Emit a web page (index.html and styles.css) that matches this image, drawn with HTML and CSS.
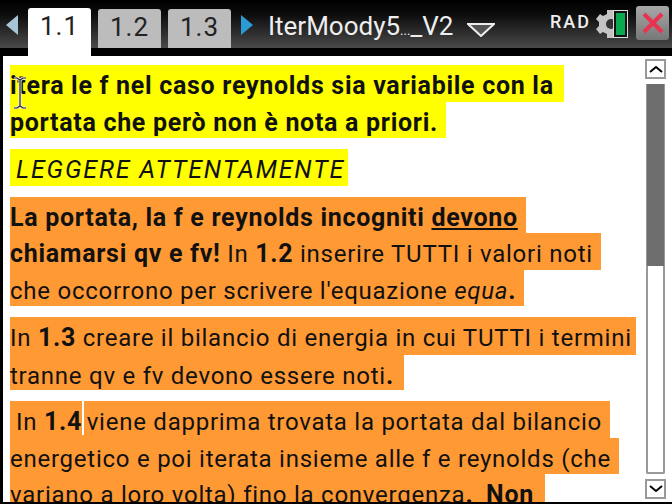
FILE: index.html
```html
<!DOCTYPE html>
<html lang="en">
<head>
    <meta charset="UTF-8">
    <title>IterMoody5..._V2</title>
    <link rel="stylesheet" href="styles.css">
</head>
<body>
  <header class="topbar">
    <svg class="arrow arrow-left" width="12" height="20" viewBox="0 0 12 20"><path d="M12 0V20L0 10Z" fill="#a9c6d6"/></svg>
    <div class="tabs">
      <div class="tab tab-active">1.1</div>
      <div class="tab">1.2</div>
      <div class="tab">1.3</div>
    </div>
    <svg class="arrow arrow-right" width="12" height="20" viewBox="0 0 12 20"><path d="M0 0V20L12 10Z" fill="#2b9ad6"/></svg>
    <div class="doc-title">IterMoody5<span class="dots">...</span>_V2</div>
    <svg class="doc-menu" width="28" height="14" viewBox="0 0 28 14"><path d="M1 1H27L14 13Z" fill="#555" stroke="#eee" stroke-width="2"/></svg>
    <div class="rad">RAD</div>
    <svg class="status" width="36" height="32" viewBox="0 0 36 32">
      <path d="M13 2h8v4l4 2 3-2 4 5-3 3v4l3 3-4 5-3-2-4 2v4h-8v-4l-4-2-3 2-4-5 3-3v-4l-3-3 4-5 3 2 4-2Z" fill="#c4c4c4"/>
      <circle cx="17" cy="16" r="5" fill="#333"/>
      <rect x="19" y="2" width="15" height="28" fill="#dcdcdc"/>
      <rect x="21" y="4" width="11" height="24" fill="#0aa84f" stroke="#111" stroke-width="2"/>
    </svg>
    <div class="close-btn">
      <svg width="24" height="24" viewBox="0 0 24 24"><path d="M3 3 21 21M21 3 3 21" stroke="#e8324f" stroke-width="4"/></svg>
    </div>
  </header>

  <main class="page">
    <div class="doc">
      <section class="para">
        <div class="line yellow bold pad-a">itera le f nel caso reynolds sia variabile con la</div>
        <div class="line yellow bold pad-b">portata che però non è nota a priori.</div>
      </section>
      <section class="para">
        <div class="line yellow italic indent pad-c">LEGGERE ATTENTAMENTE</div>
      </section>
      <section class="para">
        <div class="line orange bold pad-d">La portata, la f e reynolds incogniti <u>devono</u></div>
        <div class="line orange pad-e"><b>chiamarsi qv e fv!</b> In <b>1.2</b> inserire TUTTI i valori noti</div>
        <div class="line orange pad-f">che occorrono per scrivere l'equazione <i>equa</i><b>.</b></div>
      </section>
      <section class="para">
        <div class="line orange pad-g tall">In <b>1.3</b> creare il bilancio di energia in cui TUTTI i termini</div>
        <div class="line orange pad-h short">tranne qv e fv devono essere noti<b>.</b></div>
      </section>
      <section class="para">
        <div class="line orange indent pad-i">In <b>1.4</b><span class="caret"></span> viene dapprima trovata la portata dal bilancio</div>
        <div class="line orange pad-j">energetico e poi iterata insieme alle f e reynolds (che</div>
        <div class="line orange pad-k">variano a loro volta) fino la convergenza<b>.</b> <b class="non">Non</b></div>
      </section>
      <svg class="ibeam" width="16" height="32" viewBox="0 0 16 32"><path d="M2 1h3l3 2 3-2h3M8 3v26M2 31h3l3-2 3 2h3" fill="none" stroke="#eee" stroke-width="3"/><path d="M2 1h3l3 2 3-2h3M8 3v26M2 31h3l3-2 3 2h3" fill="none" stroke="#222" stroke-width="1.2"/></svg>
    </div>
    <aside class="scrollbar">
      <div class="scroll-btn"><svg width="14" height="8" viewBox="0 0 14 8"><path d="M1 7 7 2l6 5" fill="none" stroke="#000" stroke-width="2"/></svg></div>
      <div class="track"><div class="thumb"></div></div>
      <div class="scroll-btn"><svg width="14" height="8" viewBox="0 0 14 8"><path d="M1 1l6 5 6-5" fill="none" stroke="#000" stroke-width="2"/></svg></div>
    </aside>
  </main>
</body>
</html>
```

FILE: styles.css
```css
html, body {
  margin: 0;
  padding: 0;
  height: 504px;
  overflow: hidden;
  background: #000;
  font-family: "Roboto", "Liberation Sans", sans-serif;
}

/* top bar */
.topbar {
  height: 48px;
  margin-bottom: 8px;
  display: flex;
  align-items: flex-start;
  background: linear-gradient(#000, #0c0c0c 30%, #4a4a4a);
  color: #eee;
}
.arrow {
  flex: none;
  margin-top: 15px;
}
.arrow-left {
  margin-left: 6px;
}
.arrow-right {
  margin-left: 10px;
}
.tabs {
  display: flex;
  gap: 7px;
  margin-left: 10px;
}
.tab {
  width: 63px;
  height: 39px;
  margin-top: 9px;
  border-radius: 3px 3px 0 0;
  background: #bcbcbc;
  color: #222;
  font-size: 26px;
  line-height: 36px;
  letter-spacing: 1px;
  text-align: center;
}
.tab-active {
  height: 49px;
  margin-top: 8px;
  background: #fff;
  position: relative;
  z-index: 2;
}
.doc-title {
  flex: none;
  margin-left: 15px;
  margin-top: 11px;
  font-size: 26px;
  line-height: 30px;
  white-space: nowrap;
  width: 199px;
}
.dots {
  font-size: 13px;
}
.doc-menu {
  flex: none;
  margin-top: 23px;
}
.rad {
  margin-left: 55px;
  margin-top: 12px;
  font-size: 18px;
  line-height: 20px;
  font-weight: 500;
  letter-spacing: 2px;
  width: 44px;
}
.status {
  flex: none;
  margin-top: 8px;
}
.close-btn {
  flex: none;
  width: 33px;
  height: 34px;
  margin-top: 6px;
  margin-left: 6px;
  border-radius: 3px;
  background: linear-gradient(#a8a8a8, #777);
  display: flex;
  align-items: center;
  justify-content: center;
}

/* page */
.page {
  height: 446px;
  margin-left: 3px;
  background: #fff;
  display: flex;
  position: relative;
}
.doc {
  flex: 1;
  padding: 9px 0 0 7px;
  overflow: hidden;
}
.para {
  margin-bottom: 11px;
}
.line {
  width: fit-content;
  height: 36.5px;
  font-size: 24px;
  line-height: 42px;
  color: #111;
  white-space: nowrap;
  letter-spacing: 0.75px;
}
.tall {
  height: 38px;
}
.short {
  height: 35px;
}
.yellow {
  background: #ffff00;
}
.orange {
  background: #ff9933;
}
.bold, .line b {
  font-weight: 700;
  font-size: 25px;
  letter-spacing: 0.7px;
}
.italic {
  font-style: italic;
  font-size: 25px;
  letter-spacing: 1.85px;
}
.indent {
  padding-left: 6px;
}
.pad-a { padding-right: 10px; }
.pad-b { padding-right: 8px; }
.pad-c { padding-right: 3px; }
.pad-d { padding-right: 8px; }
.pad-e { padding-right: 8px; }
.pad-f { padding-right: 8px; }
.pad-g { padding-right: 4px; }
.pad-h { padding-right: 10px; }
.pad-i { padding-right: 8px; }
.pad-j { padding-right: 8px; }
.pad-k { padding-right: 11px; }
.non {
  margin-left: 6px;
}
.caret {
  display: inline-block;
  width: 2px;
  height: 34px;
  background: #fff;
  vertical-align: top;
  margin-right: -4px;
}
.ibeam {
  position: absolute;
  left: 9px;
  top: 21px;
}

/* scrollbar */
.scrollbar {
  flex: none;
  width: 21px;
  margin-right: 6px;
  padding-top: 3px;
  display: flex;
  flex-direction: column;
  align-items: center;
}
.scroll-btn {
  box-sizing: border-box;
  width: 21px;
  height: 20px;
  border: 2px solid #999;
  display: flex;
  align-items: center;
  justify-content: center;
}
.track {
  box-sizing: border-box;
  width: 19px;
  height: 390px;
  margin: 5px 0;
  border: solid #999;
  border-width: 0 2px 2px;
  border-radius: 0 0 2px 2px;
}
.thumb {
  height: 182px;
  background: #6e6e6e;
  margin: 0 -1px;
}
```
